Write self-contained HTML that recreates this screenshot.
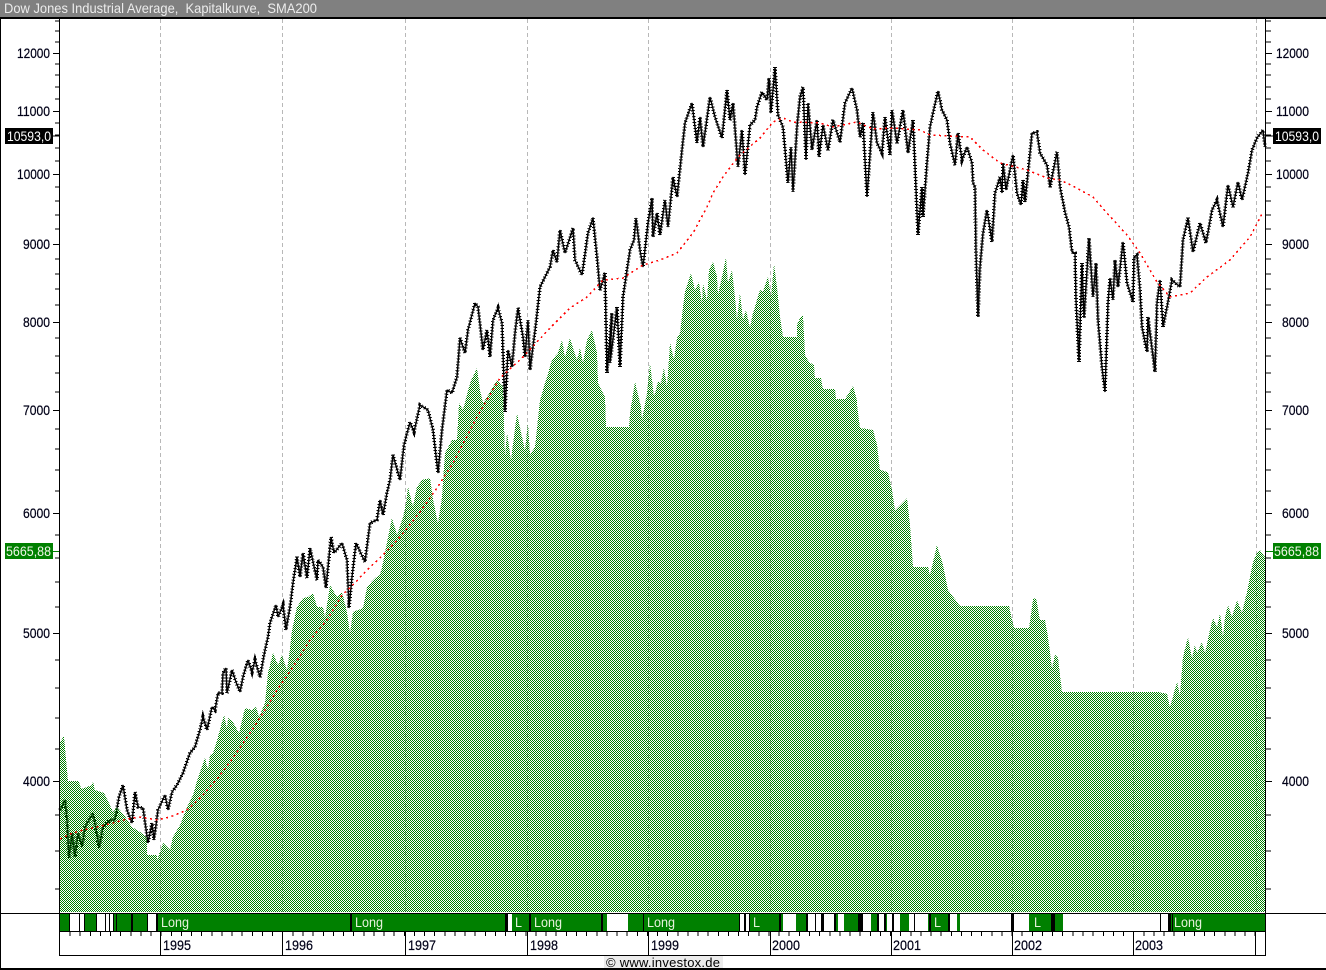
<!DOCTYPE html>
<html><head><meta charset="utf-8"><title>Dow Jones Industrial Average</title>
<style>html,body{margin:0;padding:0;background:#fff;width:1326px;height:970px;overflow:hidden}svg{display:block}text{font-family:"Liberation Sans",Arial,sans-serif;font-size:14px;fill:#000018}.h text{stroke:#000018;stroke-width:.2}</style></head>
<body>
<svg xmlns="http://www.w3.org/2000/svg" width="1326" height="970" viewBox="0 0 1326 970">
<defs><pattern id="p" x="0" y="0" width="2" height="2" patternUnits="userSpaceOnUse"><rect x="0" y="0" width="1" height="1" fill="#008000"/><rect x="1" y="1" width="1" height="1" fill="#008000"/></pattern>
<polyline id="pr" fill="none" points="60,810 65,800 67,820 69,858 72,833 75,857 78,833 82,847 85,827 93,813 97,835 99,848 103,827 110,820 115,820 119,797 123,785 127,810 132,823 135,792 138,807 143,808 148,843 152,823 154,840 158,810 165,795 168,810 172,792 177,785 183,773 190,753 195,747 200,730 203,717 207,730 212,707 215,710 218,693 222,693 223,673 226,668 227,693 232,670 236,682 240,692 243,677 248,660 252,672 255,660 260,677 265,650 268,637 270,623 276,605 278,617 283,605 286,630 290,607 293,583 297,557 300,577 303,553 307,578 310,548 317,580 318,560 323,567 326,588 331,537 334,553 342,543 347,560 349,608 352,577 356,543 365,562 370,523 377,520 380,500 383,515 387,493 390,480 393,455 400,480 404,445 410,422 414,432 420,405 428,410 433,430 438,473 442,430 447,390 452,393 457,377 460,338 465,353 468,330 475,303 478,307 483,350 487,330 490,357 493,320 498,308 502,323 505,412 508,350 512,367 515,333 518,308 523,337 525,357 528,320 530,370 536,323 540,287 550,267 553,250 557,262 560,230 565,253 573,228 575,260 582,275 588,233 593,218 597,257 600,290 605,273 607,373 612,313 610,363 617,307 620,367 623,297 627,270 630,250 634,240 636,218 640,250 643,267 648,223 652,198 653,237 657,213 660,235 665,200 668,227 673,177 677,197 682,150 685,123 692,103 697,143 700,117 703,147 710,97 715,117 722,138 727,90 730,120 733,103 738,167 742,130 745,175 750,125 755,120 757,107 762,92 767,100 769,78 771,113 775,67 778,115 783,127 788,183 791,147 793,192 797,127 800,97 803,87 806,160 808,103 812,150 817,120 819,157 823,125 828,150 833,120 840,142 845,103 852,88 857,110 860,137 863,123 867,197 873,112 877,143 882,153 885,117 890,155 892,110 897,143 903,110 908,153 913,120 918,235 922,187 923,217 927,163 930,127 933,113 938,91 942,110 947,120 950,143 955,165 958,133 962,160 967,147 972,163 973,183 975,187 976,253 978,317 980,267 983,233 987,210 992,242 995,193 1000,177 1002,193 1003,163 1006,190 1013,155 1017,193 1021,205 1023,180 1025,202 1029,163 1032,133 1037,132 1040,153 1047,165 1050,187 1057,152 1060,187 1065,212 1069,227 1072,252 1075,253 1076,300 1079,362 1082,263 1084,318 1089,238 1093,297 1096,263 1098,320 1102,367 1105,392 1108,303 1110,278 1113,300 1115,260 1118,287 1123,242 1127,283 1133,302 1134,257 1137,255 1140,290 1142,327 1147,352 1148,317 1155,372 1157,303 1160,280 1163,327 1167,307 1172,280 1180,287 1183,240 1188,218 1193,252 1200,223 1206,243 1212,210 1217,200 1223,227 1228,185 1233,207 1238,182 1242,200 1248,173 1252,150 1257,138 1263,130 1265,147"/>
</defs>
<rect width="1326" height="970" fill="#fff"/>
<!-- title -->
<rect x="0" y="0" width="1326" height="17" fill="#808080"/>
<rect x="0" y="17" width="1326" height="2" fill="#000"/>
<text x="4" y="13" textLength="313" lengthAdjust="spacingAndGlyphs" xml:space="preserve" style="fill:#ececec">Dow Jones Industrial Average,  Kapitalkurve,  SMA200</text>
<!-- grid -->
<g stroke="#b8b8b8" stroke-width="1" stroke-dasharray="4 3" shape-rendering="crispEdges">
<line x1="160.5" y1="19" x2="160.5" y2="912"/><line x1="282.5" y1="19" x2="282.5" y2="912"/><line x1="405.5" y1="19" x2="405.5" y2="912"/><line x1="527.5" y1="19" x2="527.5" y2="912"/><line x1="648.5" y1="19" x2="648.5" y2="912"/><line x1="770.5" y1="19" x2="770.5" y2="912"/><line x1="891.5" y1="19" x2="891.5" y2="912"/><line x1="1012.5" y1="19" x2="1012.5" y2="912"/><line x1="1133.5" y1="19" x2="1133.5" y2="912"/><line x1="1256.5" y1="19" x2="1256.5" y2="912"/>
</g>
<!-- price -->
<use href="#pr" stroke="#000" stroke-width="1.4" stroke-linejoin="bevel"/>
<use href="#pr" stroke="#000" stroke-width="3.6" stroke-dasharray="1 2" shape-rendering="crispEdges"/>
<!-- equity -->
<polygon fill="url(#p)" shape-rendering="crispEdges" points="60,912 60,742 64,736 68,781 79,781 81,789 92,785 93,782 95,790 104,793 110,805 113,812 117,807 124,815 132,827 140,832 147,837 147,855 157,855 157,860 163,843 170,850 173,837 180,825 187,807 193,795 198,778 205,758 208,770 210,755 213,753 218,737 224,715 227,728 228,718 233,722 239,733 245,708 252,710 256,707 259,717 265,703 268,673 273,653 278,665 282,655 287,670 290,648 292,630 297,607 303,598 308,597 313,593 317,607 323,607 325,618 330,585 337,597 342,592 347,612 350,633 353,612 363,608 367,587 375,578 380,575 383,563 392,518 397,535 403,517 406,503 408,487 413,507 417,487 422,480 430,478 433,500 438,523 442,497 445,453 452,440 457,440 459,403 463,410 470,383 477,368 480,390 483,403 487,397 497,380 503,387 505,457 507,432 511,460 517,413 522,437 525,450 528,423 530,455 535,447 540,400 552,360 558,353 562,340 565,357 570,338 577,360 580,348 583,363 587,340 592,330 597,353 598,383 605,397 606,427 629,427 630,413 635,382 641,407 642,420 647,393 650,363 654,397 658,382 661,383 664,368 667,387 670,343 674,360 677,338 680,333 683,307 685,292 691,273 695,290 699,282 702,303 703,283 707,300 709,270 713,262 717,277 718,295 723,272 726,257 728,283 732,270 735,297 737,320 740,293 743,320 746,310 750,328 753,313 760,290 763,292 768,277 771,297 774,264 777,287 780,317 783,337 797,337 797,325 800,318 803,315 805,355 809,362 814,365 815,378 821,378 823,389 835,389 836,399 845,399 853,386 857,400 857,405 860,428 873,430 877,445 880,470 888,472 892,490 895,510 900,505 907,498 910,525 913,567 928,567 930,575 937,545 943,565 948,590 960,606 1009,606 1014,628 1029,628 1031,614 1033,599 1036,598 1040,620 1045,620 1048,637 1052,668 1055,655 1058,658 1060,675 1062,692 1159,692 1167,694 1170,707 1177,682 1180,695 1183,657 1188,637 1192,658 1195,645 1197,653 1202,642 1205,653 1210,630 1213,618 1217,627 1220,613 1223,637 1225,617 1228,605 1232,617 1237,600 1242,613 1247,592 1253,562 1257,553 1260,550 1265,557 1265,912"/>
<!-- SMA -->
<polyline fill="none" stroke="#f00" stroke-width="1.5" stroke-dasharray="2 3.5" shape-rendering="crispEdges" points="60,839 70,834 83,830 97,827 113,823 127,819 140,817 157,820 170,817 187,810 200,798 218,778 233,758 250,733 265,710 277,690 293,667 310,640 327,620 342,595 350,588 367,570 383,555 400,537 420,512 437,488 453,463 477,417 500,378 523,357 550,328 570,308 587,297 603,280 623,278 643,265 660,260 677,253 693,233 707,207 713,193 723,177 738,157 760,138 773,122 783,118 793,122 820,123 833,127 857,122 873,129 893,128 920,130 930,135 950,136 970,137 983,150 1000,163 1027,170 1047,178 1060,180 1073,186 1093,197 1107,213 1127,235 1140,253 1157,282 1170,297 1190,293 1207,277 1230,260 1250,237 1263,212"/>
<!-- axes -->
<g fill="none" stroke="#000" stroke-width="1" shape-rendering="crispEdges">
<line x1="0.5" y1="18" x2="0.5" y2="969"/>
<line x1="59.5" y1="18" x2="59.5" y2="955"/>
<line x1="1265.5" y1="18" x2="1265.5" y2="955"/>
<line x1="0" y1="913.5" x2="1326" y2="913.5"/>
<line x1="59" y1="931.5" x2="1266" y2="931.5"/>
<line x1="59" y1="955.5" x2="1266" y2="955.5"/>
<path d="M55 889H59M55 851H59M55 815H59M55 749H59M55 718H59M55 688H59M55 660H59M55 607H59M55 582H59M55 558H59M55 535H59M55 491H59M55 470H59M55 449H59M55 429H59M55 392H59M55 373H59M55 356H59M55 338H59M55 305H59M55 289H59M55 274H59M55 259H59M55 229H59M55 215H59M55 201H59M55 187H59M55 161H59M55 148H59M55 135H59M55 123H59M55 99H59M55 87H59M55 75H59M55 64H59M55 42H59M55 31H59M55 21H59"/>
<path d="M53 781.5H59M53 633.5H59M53 513.5H59M53 410.5H59M53 322.5H59M53 244.5H59M53 174.5H59M53 111.5H59M53 53.5H59"/>
<path d="M1266 889H1271M1266 851H1271M1266 815H1271M1266 749H1271M1266 718H1271M1266 688H1271M1266 660H1271M1266 607H1271M1266 582H1271M1266 558H1271M1266 535H1271M1266 491H1271M1266 470H1271M1266 449H1271M1266 429H1271M1266 392H1271M1266 373H1271M1266 356H1271M1266 338H1271M1266 305H1271M1266 289H1271M1266 274H1271M1266 259H1271M1266 229H1271M1266 215H1271M1266 201H1271M1266 187H1271M1266 161H1271M1266 148H1271M1266 135H1271M1266 123H1271M1266 99H1271M1266 87H1271M1266 75H1271M1266 64H1271M1266 42H1271M1266 31H1271M1266 21H1271"/>
<path d="M1266 781.5H1272M1266 633.5H1272M1266 513.5H1272M1266 410.5H1272M1266 322.5H1272M1266 244.5H1272M1266 174.5H1272M1266 111.5H1272M1266 53.5H1272"/>
<line x1="69.5" y1="934" x2="1265" y2="934" stroke-width="4" stroke-dasharray="1 9.13"/>
<path d="M160.5 931V955M282.5 931V955M405.5 931V955M527.5 931V955M648.5 931V955M770.5 931V955M891.5 931V955M1012.5 931V955M1133.5 931V955M1255.5 931V955"/>
</g>
<line x1="53" y1="551.5" x2="59" y2="551.5" stroke="#008000" shape-rendering="crispEdges"/>
<line x1="1266" y1="551.5" x2="1273" y2="551.5" stroke="#008000" shape-rendering="crispEdges"/>
<!-- band -->
<g shape-rendering="crispEdges">
<rect x="60" y="914" width="1205" height="17" fill="#008000"/>
<g fill="#fff">
<rect x="70" y="914" width="14" height="17"/><rect x="97" y="914" width="12" height="17"/><rect x="110" y="914" width="4" height="17"/><rect x="147" y="914" width="10" height="17"/>
<rect x="508" y="914" width="4" height="17"/><rect x="607" y="914" width="21" height="17"/><rect x="740" y="914" width="9" height="17"/><rect x="783" y="914" width="13" height="17"/>
<rect x="808" y="914" width="7" height="17"/><rect x="816" y="914" width="5" height="17"/><rect x="824" y="914" width="10" height="17"/><rect x="838" y="914" width="6" height="17"/><rect x="863" y="914" width="8" height="17"/><rect x="878" y="914" width="6" height="17"/><rect x="887" y="914" width="5" height="17"/><rect x="894" y="914" width="6" height="17"/><rect x="909" y="914" width="19" height="17"/><rect x="950" y="914" width="7" height="17"/><rect x="960" y="914" width="51" height="17"/><rect x="1014" y="914" width="15" height="17"/><rect x="1063" y="914" width="97" height="17"/><rect x="1161" y="914" width="7" height="17"/>
</g>
<g fill="#000">
<rect x="69" y="914" width="1" height="17"/><rect x="79" y="914" width="1" height="17"/><rect x="84" y="914" width="1" height="17"/><rect x="96" y="914" width="1" height="17"/><rect x="105" y="914" width="1" height="17"/><rect x="109" y="914" width="1" height="17"/><rect x="113" y="914" width="1" height="17"/><rect x="116" y="914" width="1" height="17"/><rect x="131" y="914" width="2" height="17"/><rect x="147" y="914" width="1" height="17"/><rect x="156" y="914" width="2" height="17"/>
<rect x="350" y="914" width="2" height="17"/><rect x="505" y="914" width="3" height="17"/><rect x="529" y="914" width="2" height="17"/><rect x="601" y="914" width="2" height="17"/><rect x="643" y="914" width="1" height="17"/><rect x="739" y="914" width="1" height="17"/><rect x="744" y="914" width="2" height="17"/><rect x="749" y="914" width="1" height="17"/><rect x="779" y="914" width="2" height="17"/><rect x="806" y="914" width="2" height="17"/><rect x="815" y="914" width="1" height="17"/><rect x="821" y="914" width="3" height="17"/><rect x="834" y="914" width="2" height="17"/><rect x="858" y="914" width="5" height="17"/><rect x="877" y="914" width="2" height="17"/><rect x="884" y="914" width="2" height="17"/><rect x="892" y="914" width="2" height="17"/><rect x="914" y="914" width="1" height="17"/><rect x="929" y="914" width="2" height="17"/><rect x="948" y="914" width="2" height="17"/><rect x="1011" y="914" width="3" height="17"/><rect x="1051" y="914" width="4" height="17"/><rect x="1160" y="914" width="1" height="17"/><rect x="1168" y="914" width="3" height="17"/><rect x="1172" y="914" width="1" height="17"/>
</g>
</g>
<g style="font-size:14px">
<text x="161" y="927" textLength="28" lengthAdjust="spacingAndGlyphs" style="fill:#e6f2dc">Long</text>
<text x="355" y="927" textLength="28" lengthAdjust="spacingAndGlyphs" style="fill:#e6f2dc">Long</text>
<text x="515" y="927" textLength="7" lengthAdjust="spacingAndGlyphs" style="fill:#e6f2dc">L</text>
<text x="534" y="927" textLength="28" lengthAdjust="spacingAndGlyphs" style="fill:#e6f2dc">Long</text>
<text x="647" y="927" textLength="28" lengthAdjust="spacingAndGlyphs" style="fill:#e6f2dc">Long</text>
<text x="753" y="927" textLength="7" lengthAdjust="spacingAndGlyphs" style="fill:#e6f2dc">L</text>
<text x="934" y="927" textLength="7" lengthAdjust="spacingAndGlyphs" style="fill:#e6f2dc">L</text>
<text x="1034" y="927" textLength="7" lengthAdjust="spacingAndGlyphs" style="fill:#e6f2dc">L</text>
<text x="1174" y="927" textLength="28" lengthAdjust="spacingAndGlyphs" style="fill:#e6f2dc">Long</text>
</g>
<!-- years -->
<g class="h">
<text x="163" y="950" textLength="28" lengthAdjust="spacingAndGlyphs">1995</text>
<text x="285" y="950" textLength="28" lengthAdjust="spacingAndGlyphs">1996</text>
<text x="408" y="950" textLength="28" lengthAdjust="spacingAndGlyphs">1997</text>
<text x="530" y="950" textLength="28" lengthAdjust="spacingAndGlyphs">1998</text>
<text x="651" y="950" textLength="28" lengthAdjust="spacingAndGlyphs">1999</text>
<text x="772" y="950" textLength="28" lengthAdjust="spacingAndGlyphs">2000</text>
<text x="893" y="950" textLength="28" lengthAdjust="spacingAndGlyphs">2001</text>
<text x="1014" y="950" textLength="28" lengthAdjust="spacingAndGlyphs">2002</text>
<text x="1135" y="950" textLength="28" lengthAdjust="spacingAndGlyphs">2003</text>
</g>
<!-- y labels -->
<g class="h">
<text x="17" y="58" textLength="33" lengthAdjust="spacingAndGlyphs">12000</text>
<text x="17" y="116" textLength="33" lengthAdjust="spacingAndGlyphs">11000</text>
<text x="17" y="179" textLength="33" lengthAdjust="spacingAndGlyphs">10000</text>
<text x="23" y="249" textLength="27" lengthAdjust="spacingAndGlyphs">9000</text>
<text x="23" y="327" textLength="27" lengthAdjust="spacingAndGlyphs">8000</text>
<text x="23" y="415" textLength="27" lengthAdjust="spacingAndGlyphs">7000</text>
<text x="23" y="518" textLength="27" lengthAdjust="spacingAndGlyphs">6000</text>
<text x="23" y="638" textLength="27" lengthAdjust="spacingAndGlyphs">5000</text>
<text x="23" y="786" textLength="27" lengthAdjust="spacingAndGlyphs">4000</text>
<text x="1276" y="58" textLength="33" lengthAdjust="spacingAndGlyphs">12000</text>
<text x="1276" y="116" textLength="33" lengthAdjust="spacingAndGlyphs">11000</text>
<text x="1276" y="179" textLength="33" lengthAdjust="spacingAndGlyphs">10000</text>
<text x="1282" y="249" textLength="27" lengthAdjust="spacingAndGlyphs">9000</text>
<text x="1282" y="327" textLength="27" lengthAdjust="spacingAndGlyphs">8000</text>
<text x="1282" y="415" textLength="27" lengthAdjust="spacingAndGlyphs">7000</text>
<text x="1282" y="518" textLength="27" lengthAdjust="spacingAndGlyphs">6000</text>
<text x="1282" y="638" textLength="27" lengthAdjust="spacingAndGlyphs">5000</text>
<text x="1282" y="786" textLength="27" lengthAdjust="spacingAndGlyphs">4000</text>
</g>
<!-- value labels -->
<g shape-rendering="crispEdges">
<rect x="5" y="128" width="48" height="16" fill="#000"/>
<rect x="1273" y="128" width="48" height="16" fill="#000"/>
<rect x="5" y="543" width="48" height="16" fill="#008000"/>
<rect x="1273" y="543" width="48" height="16" fill="#008000"/>
</g>
<line x1="53" y1="136" x2="59" y2="136" stroke="#000" stroke-width="1"/>
<line x1="1266" y1="136" x2="1273" y2="136" stroke="#000" stroke-width="1"/>
<text x="7" y="141" textLength="44" lengthAdjust="spacingAndGlyphs" style="fill:#fff">10593,0</text>
<text x="1275" y="141" textLength="44" lengthAdjust="spacingAndGlyphs" style="fill:#fff">10593,0</text>
<text x="6" y="556" textLength="45" lengthAdjust="spacingAndGlyphs" style="fill:#f0f6e8">5665,88</text>
<text x="1274" y="556" textLength="45" lengthAdjust="spacingAndGlyphs" style="fill:#f0f6e8">5665,88</text>
<!-- bottom -->
<rect x="604" y="956" width="119" height="12" fill="#ececec" shape-rendering="crispEdges"/>
<text x="606" y="967" textLength="114" lengthAdjust="spacing" style="font-size:13px;fill:#000">© www.investox.de</text>
<rect x="0" y="968" width="1326" height="2" fill="#000" shape-rendering="crispEdges"/>
</svg>
</body></html>
